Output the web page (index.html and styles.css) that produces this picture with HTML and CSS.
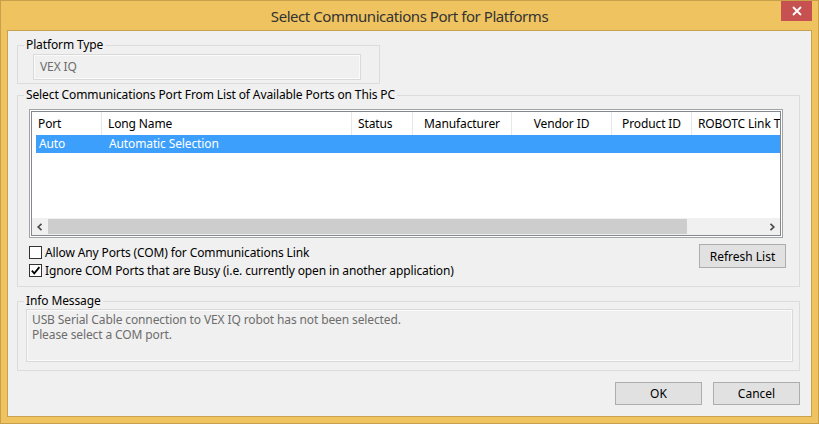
FILE: index.html
```html
<!DOCTYPE html>
<html>
<head>
<meta charset="utf-8">
<link rel="stylesheet" href="styles.css">
</head>
<body>
<div class="window">
  <div class="titlebar">
    <span class="title">Select Communications Port for Platforms</span>
    <button class="close" aria-label="Close">
      <svg width="10" height="10" viewBox="0 0 10 10"><path d="M1 1 L9 9 M9 1 L1 9" stroke="#fff" stroke-width="1.8" fill="none"/></svg>
    </button>
  </div>
  <div class="client">
    <fieldset class="group g-platform">
      <legend>Platform Type</legend>
      <div class="textbox tb-platform">VEX IQ</div>
    </fieldset>

    <fieldset class="group g-ports">
      <legend>Select Communications Port From List of Available Ports on This PC</legend>
      <div class="listview">
        <div class="lv-inner">
          <div class="lv-body">
            <div class="lv-header">
              <div class="hc c-port">Port</div>
              <div class="hc c-long">Long Name</div>
              <div class="hc c-status">Status</div>
              <div class="hc c-manu center">Manufacturer</div>
              <div class="hc c-vendor center">Vendor ID</div>
              <div class="hc c-product center">Product ID</div>
              <div class="hc c-link">ROBOTC Link Type</div>
            </div>
            <div class="lv-row selected">
              <div class="rc r-port">Auto</div>
              <div class="rc r-long">Automatic Selection</div>
            </div>
          </div>
          <div class="hscroll">
            <div class="sb-btn sb-left">
              <svg width="8" height="8" viewBox="0 0 8 8"><polyline points="5.5,0.8 2.2,4 5.5,7.2" stroke="#4a4a4a" stroke-width="1.7" fill="none"/></svg>
            </div>
            <div class="sb-track"><div class="sb-thumb"></div></div>
            <div class="sb-btn sb-right">
              <svg width="8" height="8" viewBox="0 0 8 8"><polyline points="2.5,0.8 5.8,4 2.5,7.2" stroke="#4a4a4a" stroke-width="1.7" fill="none"/></svg>
            </div>
          </div>
        </div>
      </div>
      <div class="options">
        <div class="checks">
          <label class="check"><span class="box"></span>Allow Any Ports (COM) for Communications Link</label>
          <label class="check"><span class="box">
            <svg width="11" height="11" viewBox="0 0 11 11"><polyline points="1.8,5.6 4.3,8.3 9.4,2.2" stroke="#000" stroke-width="1.8" fill="none"/></svg>
          </span>Ignore COM Ports that are Busy (i.e. currently open in another application)</label>
        </div>
        <button class="btn btn-refresh">Refresh List</button>
      </div>
    </fieldset>

    <fieldset class="group g-info">
      <legend>Info Message</legend>
      <div class="textbox tb-info">USB Serial Cable connection to VEX IQ robot has not been selected.<br>Please select a COM port.</div>
    </fieldset>

    <div class="actions">
      <button class="btn btn-dlg">OK</button>
      <button class="btn btn-dlg">Cancel</button>
    </div>
  </div>
</div>
</body>
</html>
```
FILE: styles.css
```css
* { box-sizing: border-box; }

body {
  margin: 0;
  font-family: "Noto Sans", "Open Sans", sans-serif;
  font-size: 12px;
  letter-spacing: -0.12px;
  color: #000;
}

.window {
  width: 819px;
  height: 424px;
  border: 1px solid #c9a04a;
  background: #efc360;
  padding: 0 6px 6px 6px;
  position: relative;
  display: flex;
  flex-direction: column;
}

.titlebar {
  height: 29px;
  display: flex;
  align-items: center;
  justify-content: center;
}

.title {
  font-size: 15px;
  letter-spacing: -0.45px;
  color: #333;
  line-height: 20px;
}

.close {
  position: absolute;
  top: 0;
  right: 6px;
  width: 31px;
  height: 20px;
  border: 0;
  padding: 0;
  background: #c75050;
  display: flex;
  align-items: center;
  justify-content: center;
}

.client {
  flex: 1;
  background: #f0f0f0;
  border: 1px solid #caa14e;
  padding: 6px 11px 0 9px;
  display: flex;
  flex-direction: column;
}

.group {
  margin: 0;
  padding: 0;
  border: 1px solid #dcdcdc;
  min-width: 0;
}

.group legend {
  margin-left: 6px;
  padding: 0 2px;
  height: 16px;
  line-height: 16px;
}

.textbox {
  border: 1px solid #d9d9d9;
  box-shadow: inset 0 0 0 1px #fafafa;
  background: #f0f0f0;
  color: #6d6d6d;
}

/* Platform type */
.g-platform { width: 363px; }
.tb-platform {
  width: 328px;
  height: 26px;
  margin: 1px 0 3px 15px;
  padding-left: 6px;
  line-height: 24px;
}

/* Ports group */
.g-ports { margin-top: 3px; }

.listview {
  width: 754px;
  height: 129px;
  margin: 6px 0 0 11px;
  border: 1px solid #a3a3a3;
  padding: 1px;
  background: #fff;
}

.lv-inner {
  height: 100%;
  border: 1px solid #828790;
  display: flex;
  flex-direction: column;
  overflow: hidden;
}

.lv-body { flex: 1; overflow: hidden; }

.lv-header {
  height: 23px;
  display: flex;
  white-space: nowrap;
}

.hc {
  flex: none;
  height: 23px;
  line-height: 23px;
  padding-left: 6px;
  border-right: 1px solid #e3e8ef;
  overflow: hidden;
}
.hc.center { padding-left: 0; text-align: center; }
.c-port { width: 70px; }
.c-long { width: 250px; }
.c-status { width: 61px; }
.c-manu { width: 99px; }
.c-vendor { width: 100px; }
.c-product { width: 80px; }
.c-link { width: 140px; border-right: 0; }

.lv-row {
  height: 18px;
  margin-left: 4px;
  display: flex;
  line-height: 18px;
  white-space: nowrap;
}
.lv-row.selected { background: #3d9ffc; color: #fff; }
.rc { flex: none; }
.r-port { width: 66px; padding-left: 3px; }
.r-long { width: 250px; padding-left: 7px; }

.hscroll {
  height: 17px;
  display: flex;
  background: #f0f0f0;
}
.sb-btn {
  flex: none;
  height: 17px;
  display: flex;
  align-items: center;
  justify-content: center;
}
.sb-left { width: 16px; }
.sb-right { width: 17px; }
.sb-track { flex: 1; padding: 1px 0; }
.sb-thumb { width: 639px; height: 15px; background: #cdcdcd; }

.options {
  display: flex;
  justify-content: space-between;
  align-items: flex-start;
  margin: 5px 13px 7px 11px;
}

.checks { display: flex; flex-direction: column; }

.check {
  height: 18px;
  display: flex;
  align-items: center;
  white-space: nowrap;
}

.box {
  width: 13px;
  height: 13px;
  border: 1px solid #333;
  background: #fff;
  margin-right: 3px;
  display: flex;
  align-items: center;
  justify-content: center;
}

.btn {
  font: inherit;
  color: #000;
  background: #e1e1e1;
  border: 1px solid #adadad;
  padding: 0;
}

.btn-refresh {
  width: 87px;
  height: 24px;
  margin-top: 1px;
}

/* Info group */
.g-info { margin-top: 6px; }
.tb-info {
  width: 767px;
  height: 53px;
  margin: 0 0 8px 8px;
  padding: 2px 0 0 5px;
  line-height: 15px;
}

.actions {
  margin-top: 11px;
  display: flex;
  justify-content: flex-end;
  gap: 11px;
}

.btn-dlg { width: 87px; height: 23px; }
```
